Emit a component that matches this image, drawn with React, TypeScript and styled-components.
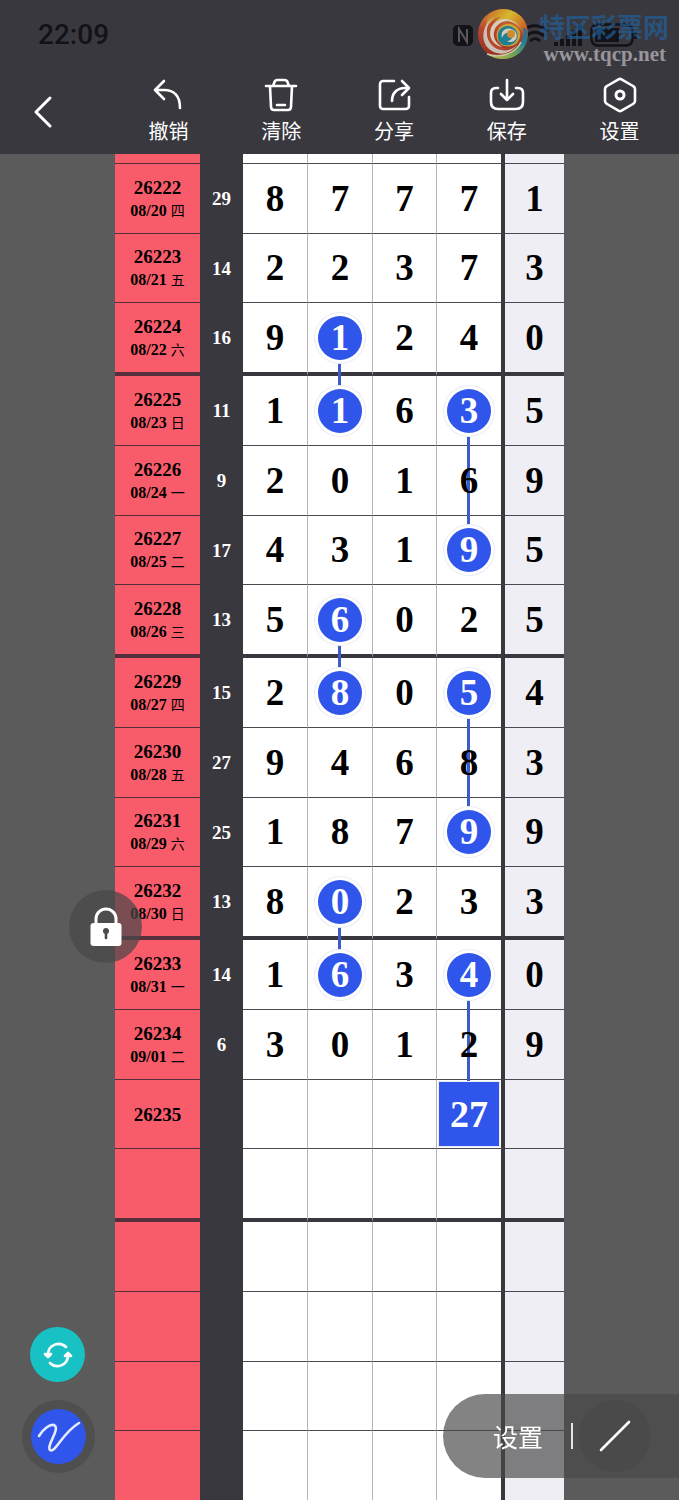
import React from "react";
import styled, { createGlobalStyle, css } from "styled-components";

const ink = "#3a383f";
const blue = "#2f55ea";
const sans = `"Noto Sans CJK SC", "Noto Sans", sans-serif`;
const serif = `"Liberation Serif", "Noto Sans CJK SC", serif`;

const GlobalStyle = createGlobalStyle`
  *, *::before, *::after { box-sizing: border-box; }
  body { margin: 0; background: #5b5b5b; font-family: ${sans}; }
  button { border: 0; padding: 0; background: none; font: inherit; color: inherit; cursor: pointer; }
`;

const Page = styled.div`
  min-height: 100vh;
  background: #5b5b5b;
`;

const Header = styled.header`
  position: sticky;
  top: 0;
  z-index: 5;
  height: 154px;
  background: ${ink};
  color: #fff;
`;

const StatusBar = styled.div`
  height: 70px;
  padding: 0 41px 0 38px;
  display: flex;
  align-items: center;
  justify-content: space-between;
  color: #131217;
`;

const Clock = styled.time`
  font: 500 28px/28px Roboto, sans-serif;
`;

const StatusIcons = styled.svg`
  display: block;
`;

const Watermark = styled.div`
  position: absolute;
  top: 8px;
  right: 10px;
  display: flex;
  gap: 10px;
`;

const WatermarkText = styled.div`
  display: flex;
  flex-direction: column;
  align-items: flex-end;
`;

const WatermarkName = styled.span`
  font: 700 26px/36px ${sans};
  color: rgba(32, 98, 158, 0.66);
`;

const WatermarkUrl = styled.span`
  font: 700 21px/20px "Liberation Serif", serif;
  color: #98969a;
  padding-right: 3px;
`;

const Toolbar = styled.nav`
  height: 84px;
  padding-right: 3px;
  display: grid;
  grid-template-columns: 112px repeat(5, 1fr);
`;

const BackButton = styled.button`
  display: flex;
  align-items: center;
  padding-left: 32px;
`;

const ToolButton = styled.button`
  display: flex;
  flex-direction: column;
  align-items: center;
  padding-top: 7px;
  font-size: 20px;
  line-height: 36px;
`;

const Icon = styled.svg`
  display: block;
  flex: none;
  fill: none;
  stroke: currentColor;
  stroke-width: 2.6;
  stroke-linecap: round;
  stroke-linejoin: round;
`;

const Board = styled.main`
  padding: 0 115px;
`;

const Chart = styled.table`
  width: 100%;
  table-layout: fixed;
  border-collapse: separate;
  border-spacing: 0;
  font-family: ${serif};
  font-weight: 700;
  text-align: center;
  color: #000;
`;

const Row = styled.tr<{ $height: number; $thick?: boolean }>`
  height: ${(p) => p.$height}px;
  --rule: ${(p) => (p.$thick ? 4 : 1)}px;
  --rule-color: ${(p) => (p.$thick ? ink : "#4b4a50")};
`;

const PeriodCell = styled.th`
  padding: 0;
  background: #f85c6b;
  border-bottom: var(--rule) solid #55303c;
  font-size: 19px;
  line-height: 23px;
`;

const DateLine = styled.div`
  font-size: 16px;
  line-height: 23px;
`;

const Weekday = styled.span`
  font: 400 14px/14px ${sans};
`;

const SumCell = styled.td`
  padding: 0;
  background: ${ink};
  border-bottom: var(--rule) solid ${ink};
  color: #fff;
  font-size: 19px;
  line-height: 23px;
`;

const DigitCell = styled.td<{ $last?: boolean }>`
  position: relative;
  padding: 0;
  background: #fff;
  border-right: ${(p) => (p.$last ? `4px solid ${ink}` : "1px solid #b4b4b6")};
  border-bottom: var(--rule) solid var(--rule-color);
  font-size: 37px;
  line-height: 44px;
`;

const ExtraCell = styled.td`
  padding: 0;
  background: #efeef4;
  border-bottom: var(--rule) solid var(--rule-color);
  font-size: 37px;
  line-height: 44px;
`;

const Digit = styled.span`
  position: relative;
  z-index: 2;
`;

const Ball = styled.span`
  position: relative;
  z-index: 2;
  display: block;
  width: 44px;
  height: 44px;
  margin: 0 auto;
  border-radius: 50%;
  background: ${blue};
  box-shadow: 0 0 0 3px #fff, 0 0 0 4px #e9edf4;
  color: #fff;
`;

const Prediction = styled.span`
  position: relative;
  z-index: 2;
  display: block;
  height: 64px;
  margin: 0 2px;
  background: ${blue};
  box-shadow: 0 0 0 1px #e8ecfb;
  color: #fff;
  font-size: 38px;
  line-height: 64px;
`;

type Link = "up" | "down" | "through";

const Connector = styled.i<{ $link: Link }>`
  position: absolute;
  z-index: 1;
  left: calc(50% - 2px);
  width: 3px;
  background: #3c5cc9;
  ${(p) =>
    p.$link === "up"
      ? css`top: 0; bottom: calc(50% + 25px);`
      : p.$link === "down"
        ? css`top: calc(50% + 25px); bottom: calc(0px - var(--rule));`
        : css`top: 0; bottom: calc(0px - var(--rule));`}
`;

const RoundButton = styled.button<{ $left: number; $bottom: number; $size: number; $tone: string }>`
  position: fixed;
  z-index: 6;
  left: ${(p) => p.$left}px;
  bottom: ${(p) => p.$bottom}px;
  width: ${(p) => p.$size}px;
  height: ${(p) => p.$size}px;
  border-radius: 50%;
  background: ${(p) => p.$tone};
  color: #fff;
  display: grid;
  place-items: center;
`;

const PenDisc = styled.span`
  width: 55px;
  height: 55px;
  border-radius: 50%;
  background: ${blue};
  display: grid;
  place-items: center;
`;

const DrawPanel = styled.div`
  position: fixed;
  z-index: 6;
  right: 0;
  bottom: 22px;
  width: 236px;
  height: 84px;
  padding: 0 28px 0 50px;
  border-radius: 42px 0 0 42px;
  background: rgba(72, 72, 72, 0.68);
  color: #fff;
  display: flex;
  align-items: center;
`;

const PanelButton = styled.button`
  font-size: 25px;
  line-height: 36px;
`;

const Divider = styled.span`
  width: 2px;
  height: 26px;
  margin-left: 28px;
  background: #e4e4e4;
`;

const LineButton = styled.button`
  width: 72px;
  height: 72px;
  margin-left: 6px;
  border-radius: 50%;
  background: rgba(72, 72, 72, 0.5);
  display: grid;
  place-items: center;
`;

interface Draw {
  period: string;
  date?: string;
  day?: string;
  sum?: number;
  digits?: string;
  balls?: number[];
  links?: Record<number, Link[]>;
  prediction?: string;
}

const draws: Draw[] = [
  { period: "26222", date: "08/20", day: "四", sum: 29, digits: "87771" },
  { period: "26223", date: "08/21", day: "五", sum: 14, digits: "22373" },
  { period: "26224", date: "08/22", day: "六", sum: 16, digits: "91240", balls: [1], links: { 1: ["down"] } },
  { period: "26225", date: "08/23", day: "日", sum: 11, digits: "11635", balls: [1, 3], links: { 1: ["up"], 3: ["down"] } },
  { period: "26226", date: "08/24", day: "一", sum: 9, digits: "20169", links: { 3: ["through"] } },
  { period: "26227", date: "08/25", day: "二", sum: 17, digits: "43195", balls: [3], links: { 3: ["up"] } },
  { period: "26228", date: "08/26", day: "三", sum: 13, digits: "56025", balls: [1], links: { 1: ["down"] } },
  { period: "26229", date: "08/27", day: "四", sum: 15, digits: "28054", balls: [1, 3], links: { 1: ["up"], 3: ["down"] } },
  { period: "26230", date: "08/28", day: "五", sum: 27, digits: "94683", links: { 3: ["through"] } },
  { period: "26231", date: "08/29", day: "六", sum: 25, digits: "18799", balls: [3], links: { 3: ["up"] } },
  { period: "26232", date: "08/30", day: "日", sum: 13, digits: "80233", balls: [1], links: { 1: ["down"] } },
  { period: "26233", date: "08/31", day: "一", sum: 14, digits: "16340", balls: [1, 3], links: { 1: ["up"], 3: ["down"] } },
  { period: "26234", date: "09/01", day: "二", sum: 6, digits: "30129", links: { 3: ["through"] } },
  { period: "26235", prediction: "27", links: { 3: ["up"] } },
  { period: "" },
  { period: "" },
  { period: "" },
  { period: "" },
  { period: "" },
];

// Rows come in groups of four; a heavy rule closes each group.
const groupHeights = [70, 70, 69, 73];

function DrawRow({ draw, height, thick }: { draw: Draw; height: number; thick?: boolean }) {
  return (
    <Row $height={height} $thick={thick}>
      <PeriodCell scope="row">
        {draw.period}
        {draw.date && (
          <DateLine>
            {draw.date} <Weekday>{draw.day}</Weekday>
          </DateLine>
        )}
      </PeriodCell>
      <SumCell>{draw.sum}</SumCell>
      {[0, 1, 2, 3].map((i) => {
        const value = draw.digits?.[i];
        return (
          <DigitCell key={i} $last={i === 3}>
            {draw.links?.[i]?.map((l) => <Connector key={l} $link={l} />)}
            {i === 3 && draw.prediction ? (
              <Prediction>{draw.prediction}</Prediction>
            ) : draw.balls?.includes(i) ? (
              <Ball>{value}</Ball>
            ) : (
              <Digit>{value}</Digit>
            )}
          </DigitCell>
        );
      })}
      <ExtraCell>{draw.digits?.[4]}</ExtraCell>
    </Row>
  );
}

function Logo() {
  return (
    <svg width="52" height="52" viewBox="0 0 52 52" aria-hidden="true">
      <defs>
        <linearGradient id="warm" x1="0.3" y1="0" x2="0.3" y2="1">
          <stop offset="0" stopColor="#cf8a3a" />
          <stop offset="0.4" stopColor="#b9472c" />
          <stop offset="1" stopColor="#8f2f22" />
        </linearGradient>
        <linearGradient id="sun" x1="0" y1="0" x2="1" y2="0.7">
          <stop offset="0" stopColor="#c9652a" />
          <stop offset="0.45" stopColor="#d6b92c" />
          <stop offset="0.75" stopColor="#cf7a2a" />
          <stop offset="1" stopColor="#b3442b" />
        </linearGradient>
        <linearGradient id="sea" x1="0" y1="1" x2="1" y2="0">
          <stop offset="0" stopColor="#cdbb45" />
          <stop offset="0.4" stopColor="#6ea552" />
          <stop offset="0.75" stopColor="#1f7d9a" />
          <stop offset="1" stopColor="#2b6f92" />
        </linearGradient>
      </defs>
      <circle cx="26" cy="26" r="25" fill="url(#warm)" />
      <path d="M12 6C24-3 43 1 49 16c3 8 2 15-2 21 1-12-5-21-16-24-9-2-17 0-22 6 0-5 1-9 3-13Z" fill="url(#sun)" />
      <path d="M50 22c3 15-8 29-24 29-6 0-12-2-16-5 15 4 29-1 34-12 2-4 3-8 2-14 2 0 3 1 4 2Z" fill="url(#sea)" />
      <path d="M10 46c14 5 29-1 34-12" fill="none" stroke="#cfc6a4" strokeWidth="1.500" />
      <path d="M18 9C8 15 7 30 16 38c7 6 17 6 24-1-6 9-19 12-28 4C2 32 6 14 18 9Z" fill="#c9c1b6" />
      <path d="M24 9c-10 4-14 14-9 23 4 7 12 10 20 7-8 5-18 3-23-6C7 23 12 11 24 9Z" fill="#b8492d" />
      <path d="M44 22C39 11 25 10 19 19c-5 8-1 17 7 20-11-1-16-12-11-21 6-10 23-10 29 4Z" fill="#d5cdb9" />
      <path d="M43 24c-3-8-13-11-20-5-6 6-4 16 4 19 5 1 9 0 12-2 3-3 5-7 4-12Z" fill="#c9a238" />
      <path d="M21 29c-1-8 7-13 14-10 6 3 7 9 4 14-3 4-8 5-12 4-3-1-6-4-6-8Z" fill="#1d7f94" />
      <path d="M25 30c-2-6 3-11 9-9 5 1 7 6 5 10-2 3-6 4-9 2 4 0 6-3 5-6-1-4-8-3-10 3Z" fill="#d3cfbe" />
      <circle cx="34" cy="26" r="4" fill="#d08a2e" />
    </svg>
  );
}

export default function App() {
  return (
    <Page>
      <GlobalStyle />
      <Header>
        <StatusBar>
          <Clock>22:09</Clock>
          <StatusIcons width="186" height="26" viewBox="0 0 186 26" fill="currentColor" aria-hidden="true">
            <rect x="1" y="3" width="20" height="21" rx="5" />
            <path d="M7 20V7l8 13V7" fill="none" stroke="#5a585e" strokeWidth="2" />
            <g fill="none" stroke="currentColor" strokeWidth="3">
              <path d="M70 9c8-7 18-7 26 0M74 14c6-5 12-5 18 0M78 19c3-3 7-3 10 0" />
            </g>
            <rect x="102" y="20" width="4" height="4" />
            <rect x="108" y="17" width="4" height="7" />
            <rect x="114" y="13" width="4" height="11" />
            <rect x="120" y="8" width="4" height="16" />
            <rect x="126" y="3" width="4" height="21" />
            <rect x="139.500" y="2.500" width="41" height="21" rx="6" fill="none" stroke="currentColor" strokeWidth="2.500" />
            <path d="M143 6h24v14h-24zM182 10h3v7h-3z" />
          </StatusIcons>
        </StatusBar>
        <Watermark>
          <Logo />
          <WatermarkText>
            <WatermarkName>特区彩票网</WatermarkName>
            <WatermarkUrl>www.tqcp.net</WatermarkUrl>
          </WatermarkText>
        </Watermark>
        <Toolbar>
          <BackButton aria-label="返回">
            <Icon width="22" height="34" viewBox="0 0 22 34">
              <path d="M18 3 4 17l14 14" strokeWidth="3" />
            </Icon>
          </BackButton>
          <ToolButton>
            <Icon width="36" height="36" viewBox="0 0 36 36">
              <path d="M14 4 5 13l9 9M5 13h9c10 0 16 6 16 18" />
            </Icon>
            撤销
          </ToolButton>
          <ToolButton>
            <Icon width="36" height="36" viewBox="0 0 36 36">
              <path d="M3 9h30M10 9l1.500-4q.7-2 3-2h7q2.300 0 3 2L26 9M7 9l1 21q.2 3 3 3h14q2.800 0 3-3l1-21M14 28h8" />
            </Icon>
            清除
          </ToolButton>
          <ToolButton>
            <Icon width="36" height="36" viewBox="0 0 36 36">
              <path d="M18 4H7a3 3 0 0 0-3 3v22a3 3 0 0 0 3 3h23a3 3 0 0 0 3-3v-9M26 4l7 7-7 7M32 11h-3c-8 0-13 5-13 13" />
            </Icon>
            分享
          </ToolButton>
          <ToolButton>
            <Icon width="36" height="36" viewBox="0 0 36 36">
              <path d="M9 11H7q-5 0-5 5v9q0 7 7 7h18q7 0 7-7v-9q0-5-5-5h-2M18 3v20M12 17l6 6 6-6" />
            </Icon>
            保存
          </ToolButton>
          <ToolButton>
            <Icon width="36" height="36" viewBox="0 0 36 36">
              <path d="M16.500 2.300q1.500-.8 3 0l11.500 6.700q2 1 2 3v12q0 2-2 3l-11.500 6.700q-1.500.8-3 0L5 27q-2-1-2-3V12q0-2 2-3Z" />
              <circle cx="18" cy="18" r="4" strokeWidth="3" />
            </Icon>
            设置
          </ToolButton>
        </Toolbar>
      </Header>

      <Board>
        <Chart>
          <colgroup>
            <col width="85" />
            <col width="43" />
            <col width="65" />
            <col width="65" />
            <col width="64" />
            <col width="68" />
            <col width="59" />
          </colgroup>
          <tbody>
            <DrawRow draw={{ period: "" }} height={10} />
            {draws.map((draw, i) => {
              const slot = (i + 1) % 4;
              return <DrawRow key={i} draw={draw} height={groupHeights[slot]} thick={slot === 3} />;
            })}
          </tbody>
        </Chart>
      </Board>

      <RoundButton aria-label="锁定" $left={69} $bottom={537} $size={73} $tone="rgba(72, 72, 72, 0.72)">
        <Icon width="32" height="40" viewBox="0 0 32 40">
          <path d="M6 17v-5a10 10 0 0 1 20 0v5" strokeWidth="3" />
          <rect x="0.500" y="16" width="31" height="23" rx="3" fill="currentColor" stroke="none" />
          <circle cx="16" cy="24" r="3" fill="#4d4a4c" stroke="none" />
          <path d="M16 25v6" stroke="#4d4a4c" />
        </Icon>
      </RoundButton>
      <RoundButton aria-label="切换" $left={30} $bottom={118} $size={55} $tone="#18c2c4">
        <Icon width="30" height="26" viewBox="0 0 30 26">
          <path d="M23 5C17-1 5 2 5 13M7 21c6 6 18 3 18-8" />
          <path d="M2 12h6l-3 3ZM22 14h6l-3-3Z" fill="currentColor" />
        </Icon>
      </RoundButton>
      <RoundButton aria-label="画笔" $left={22} $bottom={27} $size={73} $tone="#4f4f4f">
        <PenDisc>
          <Icon width="44" height="32" viewBox="0 0 44 32">
            <path d="M2 15C6 8 13 3 17 4c7 3-8 21-4 25 5 4 12-17 29-27" stroke="#e4eaff" />
          </Icon>
        </PenDisc>
      </RoundButton>

      <DrawPanel>
        <PanelButton>设置</PanelButton>
        <Divider />
        <LineButton aria-label="直线">
          <Icon width="32" height="32" viewBox="0 0 32 32">
            <path d="M2 30 30 2" />
          </Icon>
        </LineButton>
      </DrawPanel>
    </Page>
  );
}
